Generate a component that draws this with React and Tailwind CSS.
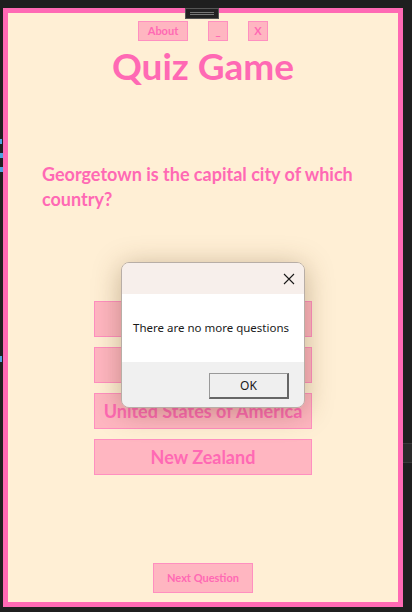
export default function App() {
  const options = ['Guyana', 'Malaysia', 'United States of America', 'New Zealand'];
  const pink = 'text-[#ff69b4]';

  return (
    <div className="relative w-[412px] h-[612px] overflow-hidden bg-[#1f1f1f] pt-[8px] pl-[3px] font-['Lato',sans-serif]">
      {/* editor bits peeking from behind the window */}
      <div className="absolute left-0 top-[139px] w-[3px] flex flex-col gap-[9px]">
        <div className="h-[5px] w-[2px] bg-[#4fa3e0]" />
        <div className="h-[5px] w-[3px] bg-[#4fa3e0]" />
        <div className="h-[5px] w-[3px] bg-[#4fa3e0]" />
      </div>
      <div className="absolute left-0 top-[356px] w-[2px] h-[6px] bg-[#4fa3e0]" />
      <div className="absolute right-0 top-[443px] w-[9px] h-[20px] bg-[#2a2a2a] border-y border-[#3a3a3a]" />

      <div className="relative w-[400px] h-[599px] border-[5px] border-[#ff69b4] bg-[#ffefd5] flex flex-col items-center">
        {/* drag handle */}
        <div className="absolute left-[177px] top-[-5px] w-[34px] h-[11px] bg-[#222] border border-[#555] flex items-center justify-center">
          <div className="w-[24px] h-[3px] border-y border-[#777]" />
        </div>

        <div className="flex gap-5 mt-[8px]">
          <button className={`w-[50px] h-[20px] bg-[#ffb6c1] border border-[#ff8fc0] text-[11px] font-bold ${pink}`}>About</button>
          <button className={`w-[20px] h-[20px] bg-[#ffb6c1] border border-[#ff8fc0] text-[11px] font-bold ${pink}`}>_</button>
          <button className={`w-[20px] h-[20px] bg-[#ffb6c1] border border-[#ff8fc0] text-[11px] font-bold ${pink}`}>X</button>
        </div>

        <h1 className={`mt-[3px] text-[37px] leading-[44px] font-bold ${pink}`}>Quiz Game</h1>

        <p className={`self-start ml-[34px] mt-[74px] w-[330px] text-[18px] leading-[25px] font-bold ${pink}`}>
          Georgetown is the capital city of which country?
        </p>

        <div className="mt-[89px] flex flex-col gap-[10px]">
          {options.map((o) => (
            <button
              key={o}
              className={`w-[218px] h-[36px] bg-[#ffb6c1] border border-[#ff8fc0] text-[18px] font-bold whitespace-nowrap ${pink}`}
            >
              {o}
            </button>
          ))}
        </div>

        <button className={`mt-auto mb-[9px] w-[100px] h-[30px] bg-[#ffb6c1] border border-[#ff8fc0] text-[11px] font-bold ${pink}`}>
          Next Question
        </button>

        {/* message box */}
        <div className="absolute left-[113px] top-[249px] w-[184px] h-[146px] rounded-[8px] border border-[#b8aea6] overflow-hidden flex flex-col shadow-[0_4px_28px_rgba(90,60,20,0.35)] font-['Noto_Sans',sans-serif]">
          <div className="h-[31px] bg-[#f7efeb] flex justify-end items-center pr-[9px]">
            <svg width="12" height="12" viewBox="0 0 12 12" stroke="#1a1a1a" strokeWidth="1.1">
              <path d="M1 1L11 11M11 1L1 11" />
            </svg>
          </div>
          <div className="h-[68px] bg-white flex items-center pl-[11px] text-[11.5px] text-[#1a1a1a]">
            There are no more questions
          </div>
          <div className="flex-1 bg-[#f0f0f0] flex justify-end items-start pt-[11px] pr-[15px]">
            <button className="w-[80px] h-[26px] bg-[#efefef] border border-[#999] border-r-[#666] border-b-[#666] border-r-2 border-b-2 text-[12px] text-[#1a1a1a]">
              OK
            </button>
          </div>
        </div>
      </div>
    </div>
  );
}
